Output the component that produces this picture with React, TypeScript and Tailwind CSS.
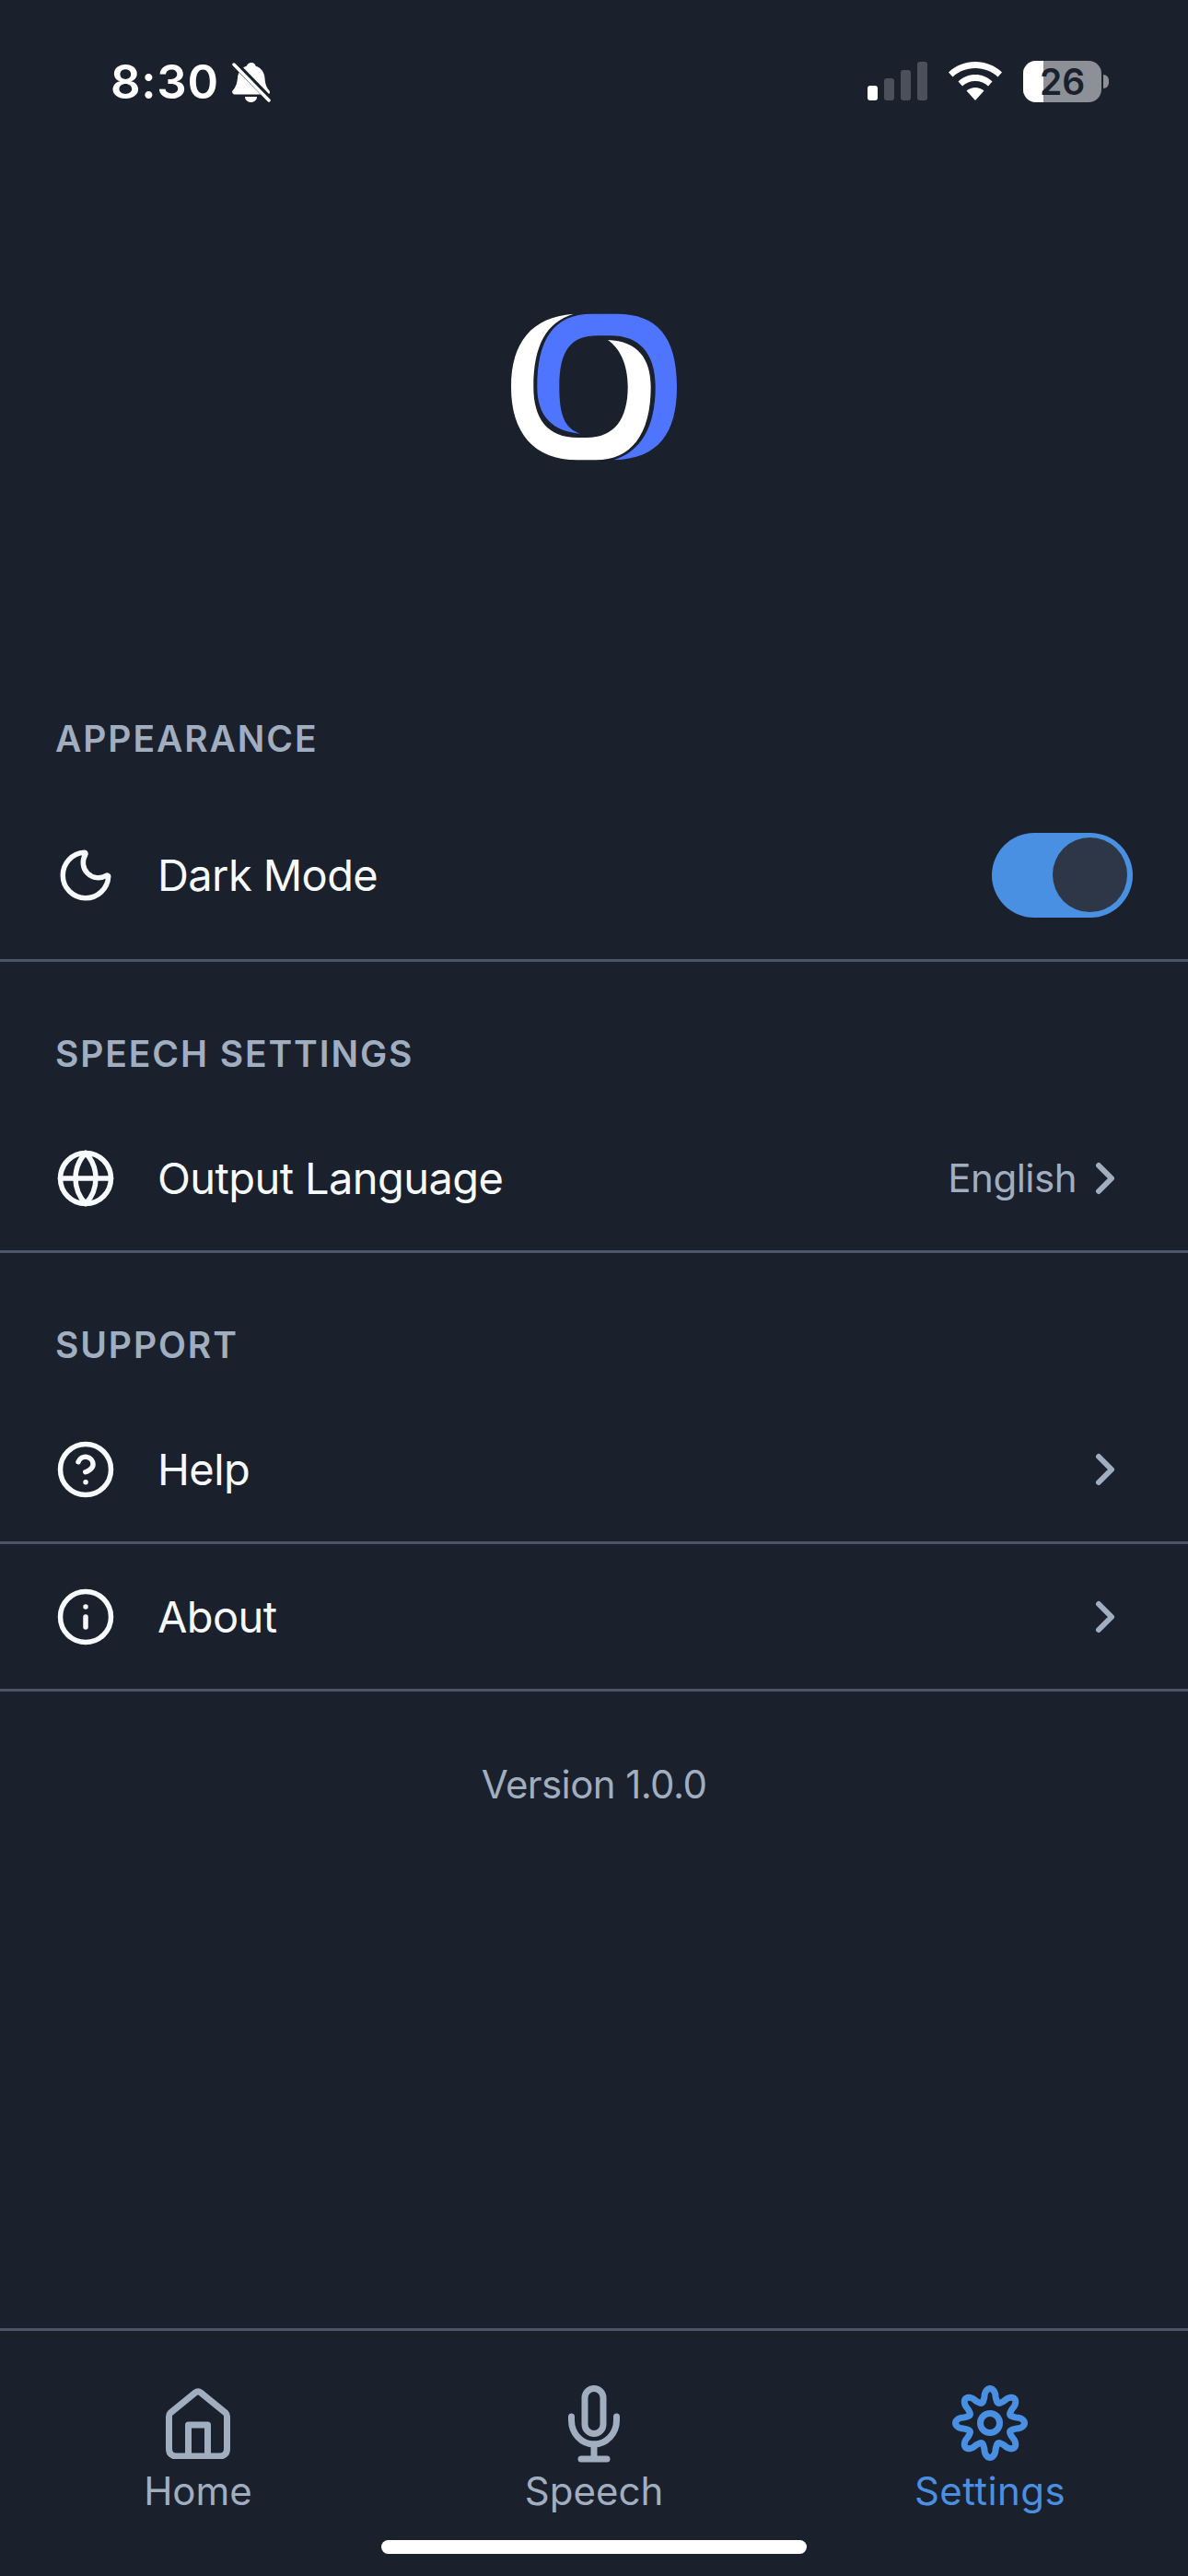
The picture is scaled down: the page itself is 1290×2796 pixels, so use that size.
import { ChevronRight, CircleHelp, Globe, Info, Moon } from 'lucide-react';
import type { ReactNode } from 'react';

const gearPath = () => {
  // wavy 8 tooth outline, same shape as the tab icon
  const pts: string[] = [];
  for (let i = 0; i < 240; i++) {
    const t = (i / 240) * Math.PI * 2;
    const wave = Math.cos(8 * t);
    const r = 30.5 + 7 * Math.sign(wave) * Math.pow(Math.abs(wave), 0.75);
    pts.push(`${(38 + r * Math.sin(t)).toFixed(2)} ${(38 - r * Math.cos(t)).toFixed(2)}`);
  }
  return `M${pts.join('L')}Z`;
};

const StatusBar = () => (
  <div className="flex h-[176px] items-center justify-between pl-[120px] pr-[86px]">
    <div className="flex items-center gap-[14px]">
      <span className="text-[51px] leading-none font-semibold tracking-[0.7px] text-white">8:30</span>
      <svg width="42" height="44" viewBox="0 0 42 44" className="mt-[4px]">
        <path fill="#fff" d="M21 0c2.500 0 4 1.500 4.500 3.500 6 2 9.500 7 10 13 .400 6 1.500 10 5 14 1 1.500 .5 4-2 4H3c-2.500 0-3.500-2.500-2.500-4 3.500-4 5-8 5.500-14C6.500 10.500 10 5.500 16 3.500 16.500 1.500 18.500 0 21 0z" />
        <path fill="#fff" d="M14 37h13c0 3.500-3 6-6.500 6S14 40.500 14 37z" />
        <path stroke="#1a202c" strokeWidth="7" d="M2 0l42 43" />
        <path stroke="#fff" strokeWidth="3.500" strokeLinecap="round" d="M2 2l38 39" />
      </svg>
    </div>
    <div className="flex items-center">
      <svg width="66" height="42" viewBox="0 0 66 42">
        <rect x="0" y="26" width="11" height="16" rx="3" fill="#fff" />
        <rect x="18" y="18" width="11" height="24" rx="3" fill="#4b505b" />
        <rect x="36" y="9" width="11" height="33" rx="3" fill="#4b505b" />
        <rect x="54" y="0" width="11" height="42" rx="3" fill="#4b505b" />
      </svg>
      <svg width="58" height="42" viewBox="0 0 58 42" className="ml-[22px]">
        <path fill="#fff" d="M29 0c11 0 21 4 29 11.500l-4.500 5C47 10.500 38.500 7 29 7S11 10.500 4.500 16.500L0 11.500C8 4 18 0 29 0z" />
        <path fill="#fff" d="M29 14c7 0 13.500 2.500 18.500 7.500L43 26.500c-3.500-3.500-8.500-5.500-14-5.500s-10.500 2-14 5.500L10.500 21.500C15.500 16.500 22 14 29 14z" />
        <path fill="#fff" d="M29 28c3.500 0 6.800 1.300 9.500 3.500L29 42l-9.500-10.500C22.200 29.300 25.500 28 29 28z" />
      </svg>
      <div className="ml-[23px] flex items-center">
        <div className="relative flex h-[45px] w-[85px] items-center justify-center overflow-hidden rounded-[14px] bg-[#8e9097]">
          <div className="absolute inset-y-0 left-0 w-[22px] bg-white" />
          <span className="relative text-[39px] leading-none font-semibold text-[#1a202c]">26</span>
        </div>
        <div className="ml-[2px] h-[15px] w-[6px] rounded-r-full bg-[#8e9097]" />
      </div>
    </div>
  </div>
);

const Logo = () => (
  <div className="flex h-[312px] items-start justify-center pt-[164px]">
    <svg width="180" height="160" viewBox="0 0 180 160">
      <path
        fill="#4f75fe"
        d="M75 130.700C45 128 28.300 112 28.300 80C28.300 30 45 .7 88 .7H115C158 .7 180 25 180 80C180 130 160 158 111.700 159.300C140 150 156.700 125 156.700 80C156.700 42 138 24.300 108 24.300H94C65 24.300 52.300 40 52.300 80C52.300 110 58 125 75 130.700Z"
      />
      <path
        fill="#fff"
        d="M67.700 .7C22 4 0 32 0 80C0 130 25 159.300 72 159.300H92C130 159.300 151.700 132 151.700 80C151.700 50 138 30 105 29C118 38 126.700 55 126.700 80C126.700 115 112 135 82 135H72C40 135 24.300 115 24.300 80C24.300 35 38 10 67.700 .7Z"
      />
    </svg>
  </div>
);

const SectionTitle = ({ children }: { children: ReactNode }) => (
  <div className="mb-[32px] pl-[60px] text-[39px] leading-[48px] font-semibold tracking-[1.9px] text-[#a0aec0]">{children}</div>
);

const Row = ({ icon, label, right, className }: { icon: ReactNode; label: string; right?: ReactNode; className: string }) => (
  <div className={`flex items-center justify-between border-b-[3px] border-[#4a5568] pr-[60px] pl-[60px] ${className}`}>
    <div className="flex items-center gap-[45px]">
      {icon}
      <span className="text-[47px] leading-none tracking-[-0.6px] text-[#f7fafc]">{label}</span>
    </div>
    {right}
  </div>
);

const iconClass = 'h-[66px] w-[66px] text-[#f7fafc]';

const Chevron = () => <ChevronRight className="mr-[2px] h-[56px] w-[56px] text-[#a0aec0]" strokeWidth={2.57} />;

const NavItem = ({ icon, label, active }: { icon: ReactNode; label: string; active?: boolean }) => (
  <div className="flex flex-1 flex-col items-center">
    <div className="flex h-[90px] items-center justify-center">{icon}</div>
    <span className={`mt-[4px] text-[42px] leading-[50px] ${active ? 'tracking-[0.4px] text-[#4a90e2]' : 'text-[#a0aec0]'}`}>{label}</span>
  </div>
);

export default function App() {
  return (
    <div className="flex h-[2796px] w-[1290px] flex-col bg-[#1a202c] font-['Inter',sans-serif]">
      <StatusBar />
      <Logo />
      <div className="flex-1">
        <div className="pt-[290px]">
          <SectionTitle>APPEARANCE</SectionTitle>
        </div>
        <Row
          className="h-[186px]"
          icon={<Moon className={iconClass} strokeWidth={2} />}
          label="Dark Mode"
          right={
            <div className="flex h-[92px] w-[153px] items-center justify-end rounded-full bg-[#4a90e2] pr-[6px]">
              <div className="h-[81px] w-[81px] rounded-full bg-[#2d3748]" />
            </div>
          }
        />
        <div className="pt-[76px]">
          <SectionTitle>SPEECH SETTINGS</SectionTitle>
        </div>
        <Row
          className="h-[160px]"
          icon={<Globe className={iconClass} strokeWidth={2} />}
          label="Output Language"
          right={
            <div className="flex items-center gap-[3px]">
              <span className="text-[42px] leading-none tracking-[-0.5px] text-[#a0aec0]">English</span>
              <Chevron />
            </div>
          }
        />
        <div className="pt-[76px]">
          <SectionTitle>SUPPORT</SectionTitle>
        </div>
        <Row className="h-[160px]" icon={<CircleHelp className={iconClass} strokeWidth={2} />} label="Help" right={<Chevron />} />
        <Row className="h-[160px]" icon={<Info className={iconClass} strokeWidth={2} />} label="About" right={<Chevron />} />
        <div className="pt-[76px] text-center text-[42px] leading-[50px] tracking-[-0.6px] text-[#a0aec0]">Version 1.0.0</div>
      </div>
      <div className="relative h-[269px] border-t-[3px] border-[#4a5568]">
        <div className="flex pt-[55px]">
          <NavItem
            label="Home"
            icon={
              <svg width="72" height="78" viewBox="0 -1 72 78" fill="none" stroke="#a0aec0" strokeWidth="7" strokeLinejoin="round" strokeLinecap="round">
                <path d="M6 27L33 5c2-1.500 4-1.500 6 0l27 22c1 1 1.500 2 1.500 4v35c0 5-3 8-8 8h-47c-5 0-8-3-8-8V31c0-2 .5-3 1.500-4z" />
                <path d="M25.500 74V40h21v34" />
              </svg>
            }
          />
          <NavItem
            label="Speech"
            icon={
              <svg width="60" height="90" viewBox="0 0 60 90" fill="none" stroke="#a0aec0" strokeWidth="7" strokeLinecap="round">
                <rect x="20" y="7.500" width="20" height="49" rx="10" />
                <path d="M5.500 38v4a24.500 26 0 0 0 49 0v-4" />
                <path d="M30 68v16M16 84h28" />
              </svg>
            }
          />
          <NavItem
            label="Settings"
            active
            icon={
              <svg width="84" height="84" viewBox="-4 -4 84 84" fill="none" stroke="#4a90e2" strokeWidth="7" strokeLinejoin="round">
                <path d={gearPath()} />
                <circle cx="38" cy="38" r="10.500" />
              </svg>
            }
          />
        </div>
        <div className="absolute bottom-[24px] left-[414px] h-[15px] w-[462px] rounded-full bg-white" />
      </div>
    </div>
  );
}
